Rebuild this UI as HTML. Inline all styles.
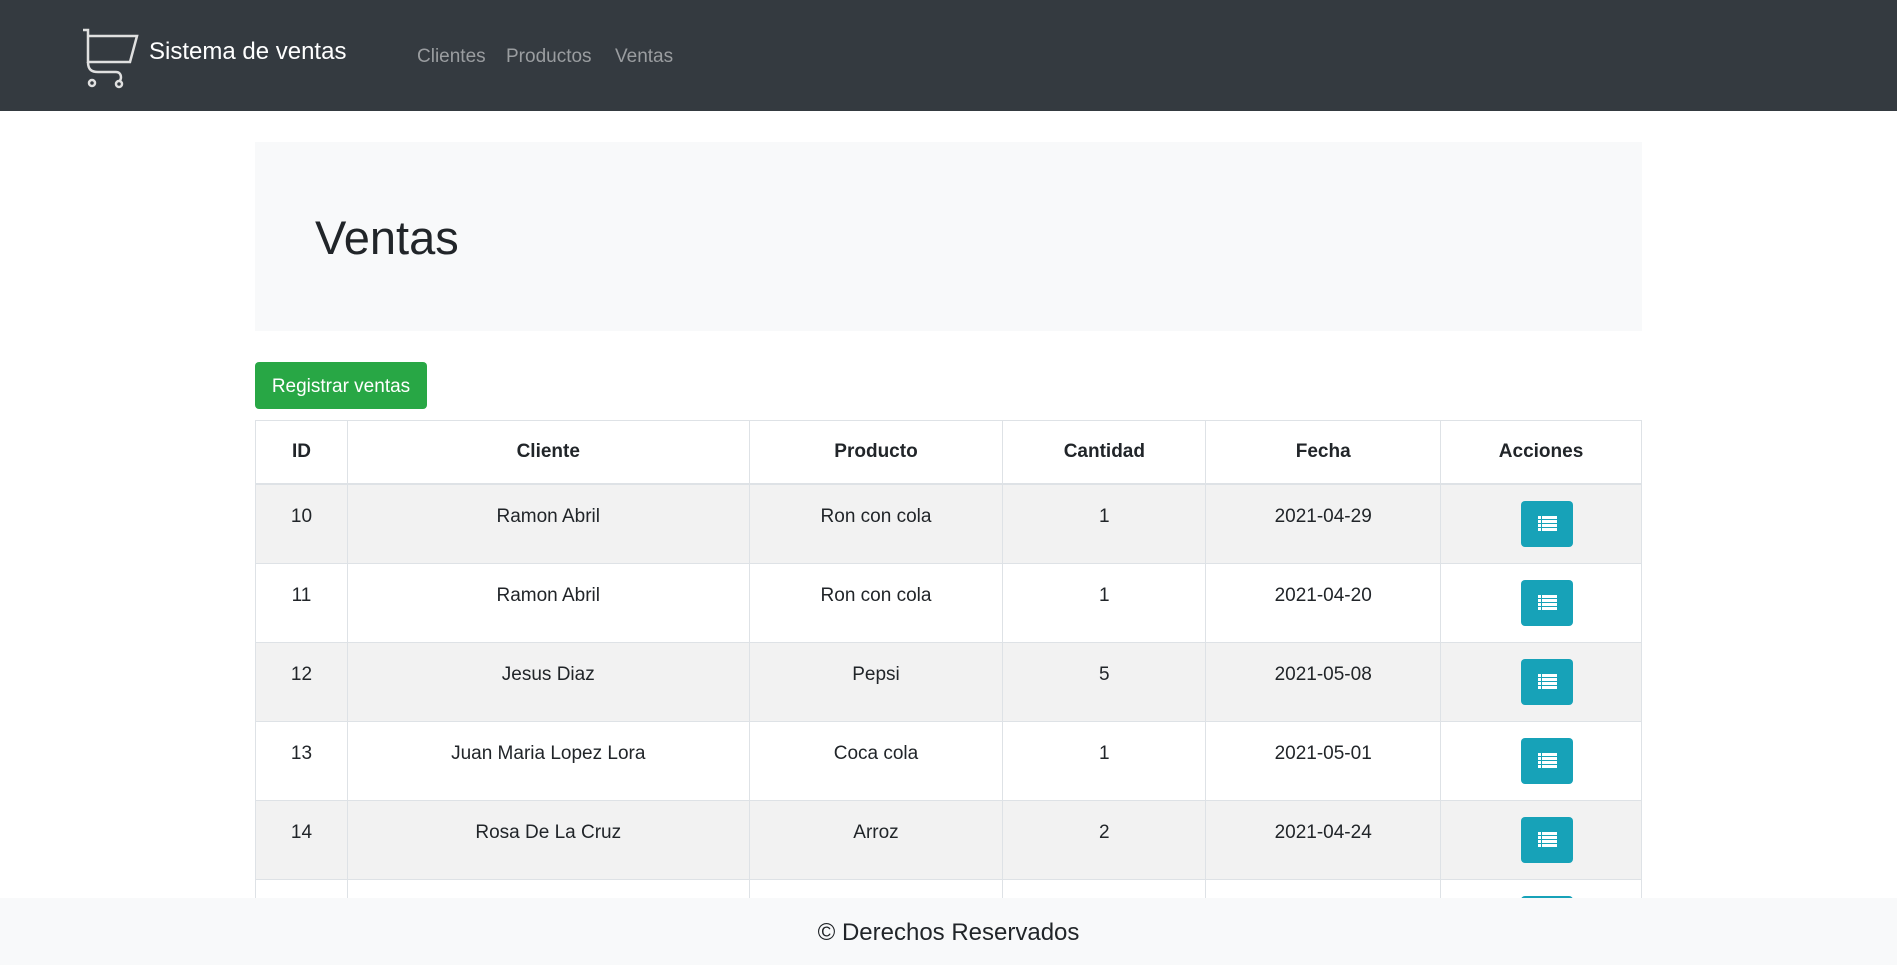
<!DOCTYPE html>
<html><head><meta charset="utf-8"><style>
*{box-sizing:border-box;margin:0;padding:0}
body{width:1897px;height:965px;overflow:hidden;background:#fff;font-family:"Liberation Sans",sans-serif;color:#212529;position:relative}
.nav{position:absolute;left:0;top:0;width:1897px;height:111px;background:#343a40}
.brand{position:absolute;left:149px;top:38px;font-size:24px;color:#fff}
.nl{position:absolute;top:46px;font-size:19px;color:#9a9da0}
.jumbo{position:absolute;left:255px;top:142px;width:1387px;height:189px;background:#f8f9fa}
.jumbo h1{position:absolute;left:60px;top:68px;font-size:47px;font-weight:400}
.btn{position:absolute;left:255px;top:362px;width:172px;height:47px;background:#28a745;color:#fff;border-radius:4px;font-size:19px;line-height:49px;text-align:center}
table{position:absolute;left:255px;top:420px;width:1387px;border-collapse:collapse;font-size:19px}
td,th{border:1px solid #dee2e6;text-align:center;vertical-align:top;padding:0}
th{height:60px;line-height:62px;font-weight:700;border-bottom:2px solid #dee2e6}
td{height:79px;padding-top:21px}
tr.s td{background:#f2f2f2}
.ib{display:inline-block;width:52px;height:46px;background:#17a2b8;border-radius:4px;margin-top:-5px;margin-left:12px;position:relative}
.ib:after{content:"";position:absolute;left:17px;top:15px;width:19px;height:16px;background:repeating-linear-gradient(#fff 0 3px,transparent 3px 4px)}
.ib:before{content:"";position:absolute;left:20px;top:15px;width:1px;height:16px;background:#17a2b8;z-index:1}
.foot{position:absolute;z-index:5;left:0;top:898px;width:1897px;height:67px;background:#f8f9fa;text-align:center;font-size:24px;line-height:70px}
</style></head><body>
<div class="nav">
<svg style="position:absolute;left:78px;top:24px" width="64" height="66" viewBox="78 24 64 66" fill="none" stroke="#e0e0e0" stroke-width="2.5">
<path d="M83 30H88V63"/><path d="M88 36H137L130 62H88"/><path d="M88 62C88 70 92 72 98 72H116C122 72 122 80 119 81"/>
<circle cx="92" cy="83" r="3"/><circle cx="119" cy="84" r="3"/></svg>
<div class="brand">Sistema de ventas</div>
<div class="nl" style="left:417px">Clientes</div>
<div class="nl" style="left:506px">Productos</div>
<div class="nl" style="left:615px">Ventas</div>
</div>
<div class="jumbo"><h1>Ventas</h1></div>
<div class="btn">Registrar ventas</div>
<table>
<colgroup><col style="width:92px"><col style="width:402px"><col style="width:254px"><col style="width:203px"><col style="width:235px"><col style="width:201px"></colgroup>
<tr><th>ID</th><th>Cliente</th><th>Producto</th><th>Cantidad</th><th>Fecha</th><th>Acciones</th></tr>
<tr class="s"><td>10</td><td>Ramon Abril</td><td>Ron con cola</td><td>1</td><td>2021-04-29</td><td><span class="ib"></span></td></tr>
<tr><td>11</td><td>Ramon Abril</td><td>Ron con cola</td><td>1</td><td>2021-04-20</td><td><span class="ib"></span></td></tr>
<tr class="s"><td>12</td><td>Jesus Diaz</td><td>Pepsi</td><td>5</td><td>2021-05-08</td><td><span class="ib"></span></td></tr>
<tr><td>13</td><td>Juan Maria Lopez Lora</td><td>Coca cola</td><td>1</td><td>2021-05-01</td><td><span class="ib"></span></td></tr>
<tr class="s"><td>14</td><td>Rosa De La Cruz</td><td>Arroz</td><td>2</td><td>2021-04-24</td><td><span class="ib"></span></td></tr>
<tr><td>15</td><td>x</td><td>x</td><td>x</td><td>x</td><td><span class="ib"></span></td></tr>
</table>
<div class="foot">© Derechos Reservados</div>
</body></html>
